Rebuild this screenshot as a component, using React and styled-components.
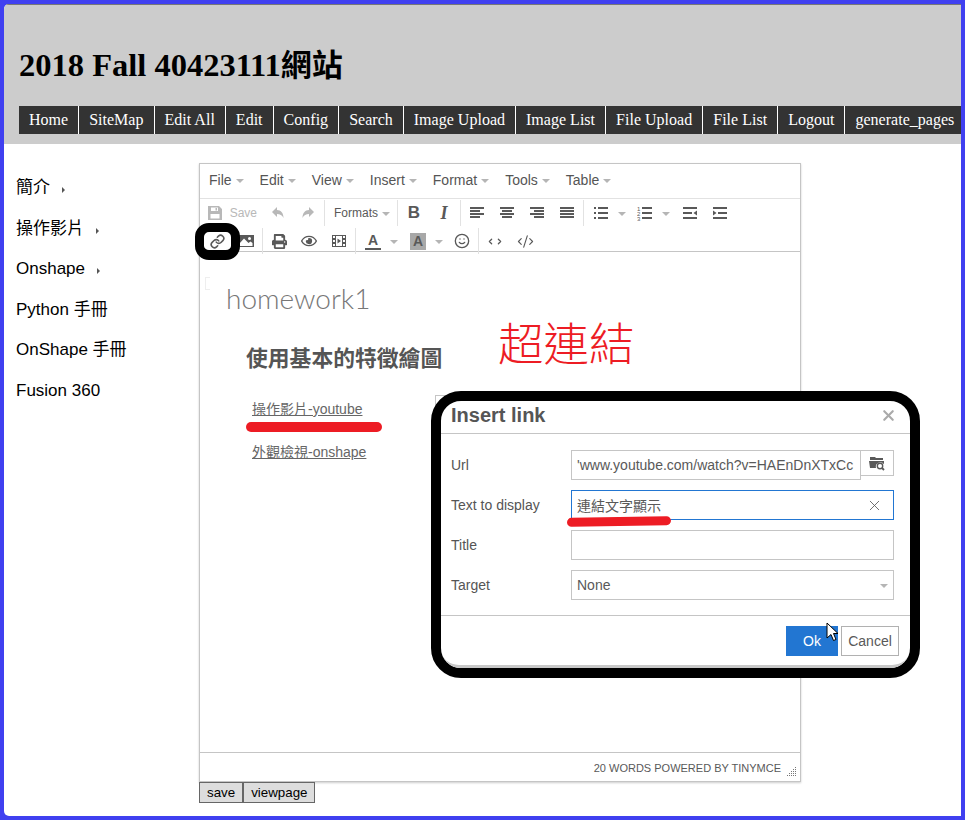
import React from 'react'
import styled, { createGlobalStyle } from 'styled-components'
import { Link, Smile, ChevronLeft, ChevronRight, CodeXml, X } from 'lucide-react'
import { FaPrint, FaRegEye } from 'react-icons/fa'

const CJK = '"Noto Sans CJK TC", sans-serif'
const SANS = `"Liberation Sans", ${CJK}`
const SERIF = '"Liberation Serif", "Noto Sans CJK TC", serif'

const Global = createGlobalStyle`
  html, body { margin: 0; padding: 0; overflow: hidden; background: #4040f0; }
  * { box-sizing: border-box; }
`

const Frame = styled.div`
  position: relative;
  width: 965px;
  height: 820px;
  padding: 4px;
  background: #4040f0;
  overflow: hidden;
`
const Page = styled.div`
  height: 812px;
  background: #fff;
  border-radius: 5px 0 0 5px;
  overflow: hidden;
`
const Header = styled.header`
  height: 140px;
  background: #ccc;
  border-top: 1px solid #777;
  padding: 42px 0 0 15px;
`
const Title = styled.h1`
  margin: 0 0 22px;
  font: bold 32.5px/37px ${SERIF};
  color: #000;
`
const TitleCjk = styled.span`
  font-size: 31px;
`
const Nav = styled.nav`
  display: flex;
  height: 28px;
`
const NavItem = styled.a`
  padding: 0 10px;
  background: #333;
  color: #fff;
  font: 16px/27px ${SERIF};
  letter-spacing: 0.015px;
  border-right: 1px solid #fff;
  white-space: nowrap;
  &:last-child { border-right: 0; flex: 1; }
`
const Body = styled.div`
  display: flex;
`
const Side = styled.ul`
  width: 195px;
  margin: 0;
  padding: 34px 0 0 12px;
  list-style: none;
`
const SideItem = styled.li`
  height: 40.5px;
  display: flex;
  align-items: flex-start;
  font: 17px/20px ${SANS};
  color: #000;
`
const SideArrow = styled.i`
  width: 0;
  height: 0;
  margin: 9px 0 0 12px;
  border-left: 3px solid #555;
  border-top: 3px solid transparent;
  border-bottom: 3px solid transparent;
`
const Editor = styled.section`
  width: 602px;
  height: 619px;
  margin-top: 19px;
  border: 1px solid #c5c5c5;
  box-shadow: 0 1px 2px rgba(0,0,0,.2);
  display: flex;
  flex-direction: column;
  font-family: ${SANS};
`
const MenuBar = styled.div`
  display: flex;
  height: 35px;
  padding: 0 0 2px 9px;
  align-items: center;
  border-bottom: 1px solid #e2e2e2;
`
const MenuItem = styled.span`
  display: flex;
  align-items: center;
  margin-right: 16px;
  font-size: 14px;
  color: #555;
`
const Caret = styled.i`
  display: inline-block;
  width: 0;
  height: 0;
  margin-left: ${p => p.$gap ?? 4}px;
  margin-top: 1px;
  border-top: 4px solid #b5b5b5;
  border-left: 4px solid transparent;
  border-right: 4px solid transparent;
`
const Toolbars = styled.div`
  height: 53px;
  padding: 0 0 0 1px;
  border-bottom: 1px solid #c5c5c5;
`
const ToolRow = styled.div`
  display: flex;
  height: 26px;
  margin-top: ${p => p.$top || 0}px;
`
const Group = styled.div`
  display: flex;
  align-items: center;
  height: 26px;
  padding-right: ${p => p.$pad ?? 1}px;
  margin-right: ${p => p.$gap ?? 1}px;
  border-right: ${p => (p.$last ? 0 : '1px solid #e2e2e2')};
`
const Tool = styled.span`
  width: ${p => p.$w || 30}px;
  height: 26px;
  display: flex;
  align-items: center;
  justify-content: center;
  color: ${p => (p.$off ? '#b8b8b8' : '#595959')};
  font-size: 12px;
`
/* a button with a small dropdown arrow: icon sits at a fixed left offset */
const SplitTool = styled(Tool)`
  justify-content: flex-start;
  padding-left: ${p => p.$left ?? 7}px;
`
const BoldGlyph = styled.b`
  font: bold 17px ${SANS};
  color: #595959;
`
const ItalicGlyph = styled.i`
  font: italic bold 18px ${SERIF};
  color: #595959;
`
const ColorA = styled.span`
  width: 16px;
  height: 17px;
  text-align: center;
  font: bold 14px/15px ${SANS};
  color: #595959;
  border-bottom: 2px solid #595959;
`
const BackA = styled.span`
  width: 16px;
  height: 17px;
  text-align: center;
  font: bold 14px/17px ${SANS};
  color: #595959;
  background: #a8a8a8;
`
const Content = styled.div`
  flex: 1;
  position: relative;
  padding: 30px 0 0 26px;
  color: #555;
`
const Bracket = styled.i`
  position: absolute;
  left: 5px;
  top: 25px;
  width: 5px;
  height: 13px;
  border: 1px solid #eee;
  border-right: 0;
`
const Thin = styled.div`
  font: 300 28px/32px Lato, sans-serif;
  color: #777;
`
const Heading = styled.h2`
  margin: 27px 0 0 20px;
  font: bold 21.8px/32px ${CJK};
  color: #555;
`
const DocLink = styled.a`
  display: block;
  margin: ${p => p.$top}px 0 0 26px;
  font: 14px/20px ${SANS};
  color: #666;
  text-decoration: underline;
`
const Status = styled.div`
  height: 29px;
  border-top: 1px solid #c5c5c5;
  display: flex;
  align-items: center;
  justify-content: flex-end;
  padding: 1px 3px 0 0;
  font-size: 11px;
  color: #595959;
`
const Grip = styled.svg`
  width: 10px;
  height: 10px;
  margin: 9px 0 0 6px;
`
const Buttons = styled.div`
  display: flex;
`
const PlainButton = styled.button`
  height: 21px;
  padding: 0 7px;
  border: 1px solid #666;
  background: #ddd;
  font: 13.33px/18px ${SANS};
  color: #000;
`
const Column = styled.div`
  display: flex;
  flex-direction: column;
  width: 602px;
`

/* annotations lying over the screenshot */
const BigRed = styled.div`
  position: absolute;
  left: 498px;
  top: 311px;
  font: 300 45.500px/60px ${CJK};
  color: #ed1c24;
`
const Marker = styled.div`
  position: absolute;
  left: ${p => p.$x}px;
  top: ${p => p.$y}px;
  width: ${p => p.$w}px;
  height: ${p => p.$h}px;
  background: #ed1c24;
  border-radius: 6px;
  transform: rotate(${p => p.$r || 0}deg);
`
const LinkRing = styled.div`
  position: absolute;
  left: 195px;
  top: 223px;
  width: 45px;
  height: 37px;
  border: 9px solid #000;
  border-bottom-width: 10px;
  border-radius: 14px;
  background: #fff;
  color: #595959;
  display: flex;
  align-items: center;
  justify-content: center;
`
const DialogCorner = styled.i`
  position: absolute;
  left: 435px;
  top: 395px;
  width: 20px;
  height: 20px;
  border: 1px solid #c5c5c5;
`
const Dialog = styled.div`
  position: absolute;
  left: 431px;
  top: 391px;
  width: 489px;
  height: 287px;
  background: #fff;
  border: 10px solid #000;
  border-radius: 30px;
  font-family: ${SANS};
  color: #555;
  display: flex;
  flex-direction: column;
  overflow: hidden;
`
const DialogHead = styled.div`
  height: 33px;
  display: flex;
  align-items: center;
  justify-content: space-between;
  padding: 0 13px 3px 10px;
  border-bottom: 1px solid #c5c5c5;
  font-size: 20px;
  font-weight: bold;
  flex: none;
`
const DialogBody = styled.div`
  flex: 1;
  padding: 16px 16px 0 10px;
  border-bottom: 1px solid #c5c5c5;
`
const FormRow = styled.div`
  display: grid;
  grid-template-columns: 120px 1fr;
  align-items: center;
  height: 30px;
  margin-bottom: 10px;
  font-size: 14px;
`
const FieldBox = styled.div`
  height: 30px;
  display: flex;
  align-items: center;
  padding: 0 5px;
  border: 1px solid ${p => (p.$focus ? '#2276d2' : '#c5c5c5')};
  justify-content: space-between;
  white-space: nowrap;
  overflow: hidden;
  font-size: 14px;
  color: #595959;
`
const UrlField = styled(FieldBox)`
  flex: 1;
`
const InputWrap = styled.div`
  display: flex;
  align-items: flex-start;
`
const Browse = styled.span`
  width: 33px;
  height: 26px;
  display: flex;
  align-items: center;
  justify-content: center;
  border: 1px solid #c5c5c5;
  border-left: 0;
`
const ClearIcon = styled(X)`
  margin-right: 5px;
`
const DialogFoot = styled.div`
  height: 52px;
  flex: none;
  display: flex;
  justify-content: flex-end;
  padding: 10px 11px 0 0;
  gap: 3px;
  border-bottom: 3px solid #c8c8c8;
  border-radius: 0 0 18px 18px;
`
const OkBtn = styled.span`
  width: 52px;
  height: 30px;
  background: #2276d2;
  color: #fff;
  font-size: 14px;
  line-height: 30px;
  text-align: center;
`
const CancelBtn = styled.span`
  width: 58px;
  height: 30px;
  border: 1px solid #b1b1b1;
  font-size: 14px;
  line-height: 28px;
  text-align: center;
  color: #595959;
`
const Cursor = styled.svg`
  position: absolute;
  left: 826px;
  top: 622px;
  width: 13px;
  height: 20px;
`

const G = ({ children }) => (
  <svg width="16" height="16" viewBox="0 0 16 16" fill="currentColor">{children}</svg>
)
const Lines = ({ rows }) => (
  <G>{rows.map((r, i) => <rect key={i} x={r[0]} y={r[1]} width={r[2]} height="2" />)}</G>
)
const SaveIcon = () => (
  <G><path fillRule="evenodd" d="M1 1h11l3 3v11H1zM4 2.500V6h7V2.500zm4.500.6h1.500v2.300H8.500zM3.500 9v4.500h9V9z" /></G>
)
const UndoIcon = () => (
  <G><path d="M7 2L2 7l5 5V9c3 0 5 1 6.500 4C13.500 8 11 5 7 5z" /></G>
)
const RedoIcon = () => (
  <G><path d="M9 2l5 5-5 5V9c-3 0-5 1-6.500 4C2.500 8 5 5 9 5z" /></G>
)
const ImageIcon = () => (
  <G><path fillRule="evenodd" d="M0 2h16v12H0zM11.500 4a1.500 1.500 0 100 3 1.500 1.500 0 000-3zM1.500 13h13v-3l-2-1.500-2 1.500L6 5.500l-4.500 5z" /></G>
)
const MediaIcon = () => (
  <G>
    <path fillRule="evenodd" d="M1 2h14v12H1zM2 3v2h2V3zm0 4v2h2V7zm0 4v2h2v-2zM12 3v2h2V3zm0 4v2h2V7zm0 4v2h2v-2zM5 3v10h6V3z" />
    <path d="M6.500 5.500v5L10 8z" />
  </G>
)
const OutdentIcon = () => (
  <G><rect x="1" y="2" width="14" height="2" /><rect x="1" y="7" width="9" height="2" /><rect x="1" y="12" width="14" height="2" /><path d="M15 5.500v5L11.500 8z" /></G>
)
const IndentIcon = () => (
  <G><rect x="1" y="2" width="14" height="2" /><rect x="6" y="7" width="9" height="2" /><rect x="1" y="12" width="14" height="2" /><path d="M1 5.500v5L4.500 8z" /></G>
)
const BulletIcon = () => (
  <G>
    <rect x="1" y="2" width="2" height="2" /><rect x="1" y="7" width="2" height="2" /><rect x="1" y="12" width="2" height="2" />
    <rect x="5" y="2" width="10" height="2" /><rect x="5" y="7" width="10" height="2" /><rect x="5" y="12" width="10" height="2" />
  </G>
)
const NumberIcon = () => (
  <G>
    <text x="0" y="5.500" fontSize="6" fontFamily="Liberation Sans">1</text>
    <text x="0" y="10.500" fontSize="6" fontFamily="Liberation Sans">2</text>
    <text x="0" y="15.500" fontSize="6" fontFamily="Liberation Sans">3</text>
    <rect x="5" y="2" width="10" height="2" /><rect x="5" y="7" width="10" height="2" /><rect x="5" y="12" width="10" height="2" />
  </G>
)
const BrowseIcon = () => (
  <svg width="16" height="15" viewBox="0 0 16 15" fill="#595959">
    <path d="M1 1h5l1 1h7v2H1zM0 5h15v3.200A4.500 4.500 0 007 12H1z" />
    <circle cx="11" cy="10" r="2.700" fill="none" stroke="#595959" strokeWidth="1.400" />
    <path d="M13 12l2 2" stroke="#595959" strokeWidth="1.800" />
  </svg>
)

const navItems = ['Home', 'SiteMap', 'Edit All', 'Edit', 'Config', 'Search', 'Image Upload', 'Image List', 'File Upload', 'File List', 'Logout', 'generate_pages']
const menus = ['File', 'Edit', 'View', 'Insert', 'Format', 'Tools', 'Table']

export default function App() {
  return (
    <Frame>
      <Global />
      <Page>
        <Header>
          <Title>2018 Fall 40423111<TitleCjk>網站</TitleCjk></Title>
          <Nav>
            {navItems.map(n => <NavItem key={n}>{n}</NavItem>)}
          </Nav>
        </Header>
        <Body>
          <Side>
            <SideItem>簡介<SideArrow /></SideItem>
            <SideItem>操作影片<SideArrow /></SideItem>
            <SideItem>Onshape<SideArrow /></SideItem>
            <SideItem>Python 手冊</SideItem>
            <SideItem>OnShape 手冊</SideItem>
            <SideItem>Fusion 360</SideItem>
          </Side>
          <Column>
            <Editor>
              <MenuBar>
                {menus.map(m => <MenuItem key={m}>{m}<Caret /></MenuItem>)}
              </MenuBar>
              <Toolbars>
                <ToolRow $top={1}>
                  <Group>
                    <Tool $w={62} $off><SaveIcon />&nbsp;&nbsp;Save</Tool>
                    <Tool $off><UndoIcon /></Tool>
                    <Tool $off><RedoIcon /></Tool>
                  </Group>
                  <Group $pad={8}>
                    <SplitTool $w={63} $left={8}>Formats<Caret /></SplitTool>
                  </Group>
                  <Group>
                    <Tool><BoldGlyph>B</BoldGlyph></Tool>
                    <Tool><ItalicGlyph>I</ItalicGlyph></Tool>
                  </Group>
                  <Group $gap={2}>
                    <Tool><Lines rows={[[1, 2, 14], [1, 5, 10], [1, 8, 14], [1, 11, 10]]} /></Tool>
                    <Tool><Lines rows={[[1, 2, 14], [3, 5, 10], [1, 8, 14], [3, 11, 10]]} /></Tool>
                    <Tool><Lines rows={[[1, 2, 14], [5, 5, 10], [1, 8, 14], [5, 11, 10]]} /></Tool>
                    <Tool><Lines rows={[[1, 2, 14], [1, 5, 14], [1, 8, 14], [1, 11, 14]]} /></Tool>
                  </Group>
                  <Group $last>
                    <SplitTool $w={44}><BulletIcon /><Caret $gap={9} /></SplitTool>
                    <SplitTool $w={45}><NumberIcon /><Caret $gap={9} /></SplitTool>
                    <Tool><OutdentIcon /></Tool>
                    <Tool><IndentIcon /></Tool>
                  </Group>
                </ToolRow>
                <ToolRow $top={2}>
                  <Group>
                    <Tool><Link size={15} strokeWidth={2.5} /></Tool>
                    <Tool><ImageIcon /></Tool>
                  </Group>
                  <Group>
                    <Tool><FaPrint size={15} /></Tool>
                    <Tool><FaRegEye size={16} /></Tool>
                    <Tool><MediaIcon /></Tool>
                  </Group>
                  <Group>
                    <SplitTool $w={45} $left={8}><ColorA>A</ColorA><Caret $gap={9} /></SplitTool>
                    <SplitTool $w={45} $left={8}><BackA>A</BackA><Caret $gap={9} /></SplitTool>
                    <Tool><Smile size={16} strokeWidth={2} /></Tool>
                  </Group>
                  <Group $last>
                    <Tool><ChevronLeft size={9} strokeWidth={3.5} /><ChevronRight size={9} strokeWidth={3.5} /></Tool>
                    <Tool><CodeXml size={17} strokeWidth={1.6} /></Tool>
                  </Group>
                </ToolRow>
              </Toolbars>
              <Content>
                <Bracket />
                <Thin>homework1</Thin>
                <Heading>使用基本的特徵繪圖</Heading>
                <DocLink $top={26}>操作影片-youtube</DocLink>
                <DocLink $top={23}>外觀檢視-onshape</DocLink>
              </Content>
              <Status>
                <span>20 WORDS POWERED BY TINYMCE</span>
                <Grip viewBox="0 0 10 10" fill="#777">
                  <rect x="8" y="0" width="1" height="1" />
                  <rect x="6" y="2" width="1" height="1" /><rect x="8" y="2" width="1" height="1" />
                  <rect x="4" y="4" width="1" height="1" /><rect x="6" y="4" width="1" height="1" /><rect x="8" y="4" width="1" height="1" />
                  <rect x="2" y="6" width="1" height="1" /><rect x="4" y="6" width="1" height="1" /><rect x="6" y="6" width="1" height="1" /><rect x="8" y="6" width="1" height="1" />
                  <rect x="0" y="8" width="1" height="1" /><rect x="2" y="8" width="1" height="1" /><rect x="4" y="8" width="1" height="1" /><rect x="6" y="8" width="1" height="1" /><rect x="8" y="8" width="1" height="1" />
                </Grip>
              </Status>
            </Editor>
            <Buttons>
              <PlainButton>save</PlainButton>
              <PlainButton>viewpage</PlainButton>
            </Buttons>
          </Column>
        </Body>
      </Page>

      <BigRed>超連結</BigRed>
      <Marker $x={246} $y={422} $w={136} $h={10} />
      <LinkRing><Link size={15} strokeWidth={2.5} /></LinkRing>

      <DialogCorner />
      <Dialog>
        <DialogHead>Insert link<X size={17} strokeWidth={3} color="#aaa" /></DialogHead>
        <DialogBody>
          <FormRow>
            Url
            <InputWrap>
              <UrlField>'www.youtube.com/watch?v=HAEnDnXTxCc</UrlField>
              <Browse><BrowseIcon /></Browse>
            </InputWrap>
          </FormRow>
          <FormRow>
            Text to display
            <FieldBox $focus>連結文字顯示<ClearIcon size={17} strokeWidth={1.2} /></FieldBox>
          </FormRow>
          <FormRow>
            Title
            <FieldBox />
          </FormRow>
          <FormRow>
            Target
            <FieldBox>None<Caret /></FieldBox>
          </FormRow>
        </DialogBody>
        <DialogFoot>
          <OkBtn>Ok</OkBtn>
          <CancelBtn>Cancel</CancelBtn>
        </DialogFoot>
      </Dialog>
      <Marker $x={567} $y={517} $w={104} $h={9} $r={-1} />
      <Cursor viewBox="0 0 13 20">
        <path d="M1 1v15l4-3.500 2.500 6 2.500-1-2.500-6H12z" fill="#fff" stroke="#000" strokeWidth="1" />
      </Cursor>
    </Frame>
  )
}
